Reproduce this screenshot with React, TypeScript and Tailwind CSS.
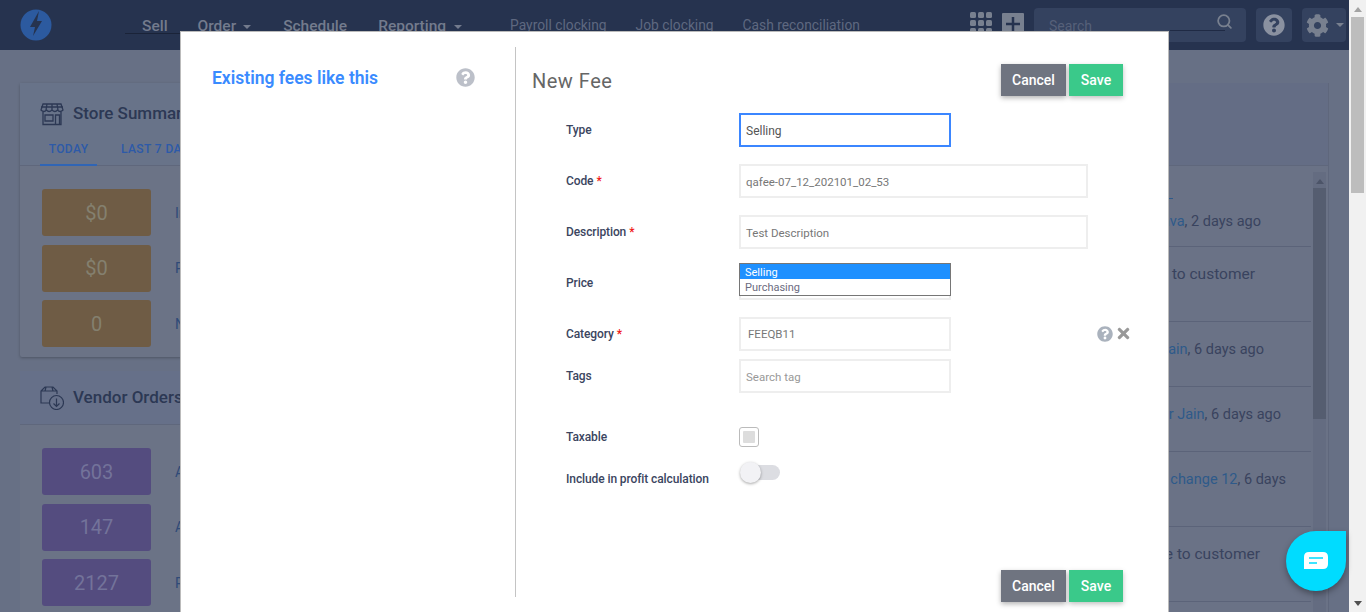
import { FaCog, FaQuestionCircle, FaTimes } from "react-icons/fa";
import { Search } from "lucide-react";

const font = "font-['Roboto',sans-serif]";

function ModalButtons() {
  return (
    <div className="flex gap-[3px]">
      <button className="w-[65px] h-8 bg-[#6f7480] text-white text-sm font-medium shadow-[0_2px_5px_rgba(0,0,0,0.3)]">
        Cancel
      </button>
      <button className="w-[54px] h-8 bg-[#3ac98a] text-white text-sm font-medium shadow-[0_2px_5px_rgba(0,0,0,0.25)]">
        Save
      </button>
    </div>
  );
}

function Required() {
  return <span className="text-[#f01818] ml-[3px]">*</span>;
}

function Field({ label, required, className, children }: { label: string; required?: boolean; className?: string; children: React.ReactNode }) {
  return (
    <div className={"flex items-center " + (className ?? "")}>
      <div className="w-[173px] text-xs font-medium text-[#3b4560] tracking-[-0.1px]">
        {label}
        {required && <Required />}
      </div>
      {children}
    </div>
  );
}

function TextBox({ value, wide, muted, inset, nudge }: { value: string; wide?: boolean; muted?: boolean; inset?: boolean; nudge?: boolean }) {
  return (
    <div className={(wide ? "w-[349px]" : "w-[212px]") + " h-[34px] border-2 border-[#eeeeee] flex items-center text-[11.5px] " + (inset ? "px-[7px] " : "px-[5px] ") + (nudge ? "pt-px " : "pt-[3px] ") + (muted ? "text-[#999]" : "text-[#777]")}>
      {value}
    </div>
  );
}

function Tile({ value, color, text, label }: { value: string; color: string; text: string; label: string }) {
  return (
    <div className="flex items-center">
      <div className={"w-[109px] h-[47px] rounded-[3px] flex items-center justify-center text-xl " + color + " " + text}>{value}</div>
      <span className="ml-6 text-sm text-[#2f4a78]">{label}</span>
    </div>
  );
}

function ActivityRow({ height, pad, large, children }: { height: string; pad: string; large?: boolean; children: React.ReactNode }) {
  return (
    <div className={"flex justify-end border-b border-[#5b6379] text-[#39435e] whitespace-nowrap " + (large ? "text-[15.5px] " : "text-[14.5px] ") + height + " " + pad}>
      {children}
    </div>
  );
}

function NavBar() {
  return (
    <header className="h-[50px] bg-[#26334f] flex items-center shrink-0">
      <svg className="ml-5 w-8 h-8" viewBox="0 0 32 32">
        <circle cx="16" cy="16" r="15.5" fill="#2c5a9f" />
        <path d="M19 2 L10 18 L15 18 L13 27 L22 12 L17 12 Z" fill="#26334f" />
      </svg>
      <nav className="flex items-center ml-[90px] text-[15.5px] font-medium text-[#737b8d] h-full pt-1">
        <span className="relative">
          Sell
          <span className="absolute left-[-17px] top-[18px] w-[60px] h-px bg-[#1a2338]" />
        </span>
        <span className="ml-[30px]">Order</span>
        <span className="ml-[7px] border-x-[4px] border-t-[4px] border-x-transparent border-t-[#737b8d]" />
        <span className="ml-[32px]">Schedule</span>
        <span className="ml-[31px]">Reporting</span>
        <span className="ml-[8px] border-x-[4px] border-t-[4px] border-x-transparent border-t-[#737b8d]" />
        <div className="ml-[48px] -mt-[3px] flex gap-[29px] text-[13.8px] font-normal text-[#5e6880]">
          <span>Payroll clocking</span>
          <span>Job clocking</span>
          <span>Cash reconciliation</span>
        </div>
      </nav>
      <div className="ml-auto flex items-center">
        <svg className="w-[23px] h-[23px] -mt-[3px]" viewBox="0 0 23 23" fill="#78808f">
          <rect x="0" y="0" width="6" height="6" rx="1.5" />
          <rect x="8" y="0" width="6" height="6" rx="1.5" />
          <rect x="16" y="0" width="6" height="6" rx="1.5" />
          <rect x="0" y="8" width="6" height="6" rx="1.5" />
          <rect x="8" y="8" width="6" height="6" rx="1.5" />
          <rect x="16" y="8" width="6" height="6" rx="1.5" />
          <rect x="0" y="16" width="6" height="6" rx="1.5" />
          <rect x="8" y="16" width="6" height="6" rx="1.5" />
          <rect x="16" y="16" width="6" height="6" rx="1.5" />
        </svg>
        <svg className="ml-[9px] w-[22px] h-[22px] -mt-[3px]" viewBox="0 0 22 22">
          <rect width="22" height="22" rx="1" fill="#78808f" />
          <path d="M11 4 V18 M4 11 H18" stroke="#26334f" strokeWidth="2.5" />
        </svg>
        <div className="relative ml-[10px] w-[212px] h-[34px] rounded bg-[#34425f] flex items-center justify-between pl-[15px] pr-[13px] pt-[2px] text-sm text-[#566079]">
          <span>Search</span>
          <Search className="w-[17px] h-[17px] text-[#78808f] -mt-[10px]" strokeWidth={2.5} />
          <span className="absolute left-[136px] top-[22px] w-[55px] h-px bg-[#1f2a44]" />
        </div>
        <div className="ml-[10px] w-9 h-[34px] rounded bg-[#34425f] flex items-center justify-center">
          <FaQuestionCircle className="w-[22px] h-[22px] text-[#8a91a0]" />
        </div>
        <div className="ml-[10px] mr-[3px] w-11 h-[34px] rounded bg-[#34425f] flex items-center pl-1">
          <FaCog className="w-[23px] h-[23px] text-[#78808f]" />
          <span className="ml-[7px] border-x-[4px] border-t-[4px] border-x-transparent border-t-[#78808f]" />
        </div>
      </div>
    </header>
  );
}

function LeftColumn() {
  return (
    <div className="w-[480px] flex flex-col gap-[14px]">
      <section className="h-[274px] bg-[#6b7386] shadow-[0_1px_3px_rgba(0,0,0,0.25)] rounded-[2px]">
        <div className="h-[83px] bg-[#687389] border-b border-[#5f677c] px-5 pt-[18px]">
          <div className="flex items-center text-[17px] font-medium text-[#2c3854]">
            <svg className="w-6 h-6 mr-[9px]" viewBox="0 0 24 24" fill="none" stroke="#2c3854" strokeWidth="1.3">
              <path d="M3 2 H21 L23 8 Q20 11 17.5 8 Q15 11 12 8 Q9 11 6.500 8 Q4 11 1 8 Z M7 2 L6 8 M12 2 V8 M17 2 L18 8 M1 5 H23" />
              <path d="M3 10 V22.500 H21 V10 M5 13 H13 V19 H5 Z M15.500 22.500 V13 H19.500 V22.500" />
            </svg>
            Store Summary
          </div>
          <div className="flex mt-[12px] text-xs font-medium tracking-[0.4px] text-[#2d5aa8]">
            <span className="w-[57px] h-[27px] text-center border-b-2 border-[#3065b5] pt-[2px]">TODAY</span>
            <span className="ml-6 pt-[2px]">LAST 7 DAYS</span>
          </div>
        </div>
        <div className="pl-[22px] pt-[23px] flex flex-col gap-[8.7px]">
          <Tile value="$0" color="bg-[#6f5c45]" text="text-[#84806f]" label="Invoices" />
          <Tile value="$0" color="bg-[#6f5c45]" text="text-[#84806f]" label="Payments" />
          <Tile value="0" color="bg-[#6f5c45]" text="text-[#84806f]" label="New" />
        </div>
      </section>
      <section className="h-[260px] bg-[#6b7386] rounded-[2px]">
        <div className="h-[54px] bg-[#667089] border-b border-[#5f677c] px-5 flex items-center text-[17px] font-medium text-[#2c3854]">
          <svg className="w-6 h-6 mr-[9px]" viewBox="0 0 24 24" fill="none" stroke="#2c3854" strokeWidth="1.2">
            <path d="M10 17 H1 V5 L5 1 H13 L17 5 V8 M1 5 H17 M6 1 L5 5 M12 1 L13 5" />
            <circle cx="16.500" cy="16.500" r="7" />
            <path d="M16.500 12.500 V20 M13.500 17.500 L16.500 20.500 L19.500 17.500" />
          </svg>
          Vendor Orders
        </div>
        <div className="pl-[22px] pt-[23px] flex flex-col gap-[8.7px]">
          <Tile value="603" color="bg-[#544c7f]" text="text-[#73739a]" label="Awaiting" />
          <Tile value="147" color="bg-[#544c7f]" text="text-[#73739a]" label="Approved" />
          <Tile value="2127" color="bg-[#544c7f]" text="text-[#73739a]" label="Received" />
        </div>
      </section>
    </div>
  );
}

function RightColumn() {
  return (
    <section className="flex-1 h-[560px] bg-[#6a7286] border-r border-[#5f677c] flex flex-col">
      <div className="h-[83px] bg-[#646d85] border-b border-[#5f677c] shrink-0" />
      <div className="flex flex-1 pt-[6px] pr-[2px]">
        <div className="flex-1">
          <div className="h-[75px] flex flex-col items-end border-b border-[#5b6379] text-[14.5px] text-[#39435e] whitespace-nowrap pr-[50px] pt-[16px]">
            <span className="self-end mr-[88px] w-[5px] h-px bg-[#2e5a8a] mt-[10px] mb-[12px]" />
            <span><span className="text-[#2e5a8a]">Rajesh Srivastava</span>, 2 days ago</span>
          </div>
          <ActivityRow height="h-[75px]" pad="pr-[56px] pt-[16px]" large>
            <span>to customer</span>
          </ActivityRow>
          <ActivityRow height="h-[65px]" pad="pr-[47px] pt-[17px]">
            <span><span className="text-[#2e5a8a]">Jain</span>, 6 days ago</span>
          </ActivityRow>
          <ActivityRow height="h-[65px]" pad="pr-[30px] pt-[17px]">
            <span><span className="text-[#2e5a8a]">r Jain</span>, 6 days ago</span>
          </ActivityRow>
          <ActivityRow height="h-[75px]" pad="pr-[25px] pt-[17px]">
            <span><span className="text-[#2e5a8a]">change 12</span>, 6 days</span>
          </ActivityRow>
          <ActivityRow height="h-[75px]" pad="pr-[51px] pt-[16px]" large>
            <span>sale to customer</span>
          </ActivityRow>
        </div>
        <div className="w-[13px] ml-[2px] bg-[#646c81] flex flex-col items-center h-full">
          <span className="mt-[7px] border-x-[4px] border-b-[5px] border-x-transparent border-b-[#4c5468]" />
          <div className="mt-1 w-full h-[231px] bg-[#555d70]" />
        </div>
      </div>
    </section>
  );
}

function FeeModal() {
  return (
    <div className="absolute left-[180px] top-[31px] w-[989px] h-[581px] bg-white border-l border-t border-r border-[#bbbbbb] flex">
      <div className="w-[335px] mt-[15px] h-[550px] border-r border-[#c4c4c4] pl-[31px] pr-[40px] flex justify-between pt-[17px]">
        <h3 className="text-[17.5px] font-semibold text-[#3a8bff] leading-7 whitespace-nowrap">Existing fees like this</h3>
        <FaQuestionCircle className="w-[19px] h-[19px] mt-1 text-[#bcc0c9]" />
      </div>
      <div className="flex-1 flex flex-col pl-4 pr-[45px]">
        <div className="flex items-center justify-between h-8 mt-[32px]">
          <h2 className="text-xl text-[#666] tracking-[0.5px] mt-[2px]">New Fee</h2>
          <ModalButtons />
        </div>
        <div className="pl-[34px] mt-[17px] flex flex-col">
          <Field label="Type" className="mb-[17px]">
            <div className="w-[212px] h-[34px] border-2 border-[#3b86ff] flex items-center px-[5px] pt-[2px] text-xs text-[#555]">Selling</div>
          </Field>
          <Field label="Code" required className="mb-[17px]">
            <TextBox value="qafee-07_12_202101_02_53" wide />
          </Field>
          <Field label="Description" required className="mb-[17px]">
            <TextBox value="Test Description" wide />
          </Field>
          <Field label="Price" className="mb-[17px] relative">
            <TextBox value="" />
            <div className="absolute left-[173px] top-[-3px] w-[212px] h-[33px] border border-[#767676] bg-white text-[11px] leading-[15px]">
              <div className="h-[15px] bg-[#1e90ff] text-white pl-[5px] pt-px">Selling</div>
              <div className="text-[#6b6b80] pl-[5px] pt-px">Purchasing</div>
            </div>
          </Field>
          <Field label="Category" required className="mb-2 relative">
            <TextBox value="FEEQB11" inset nudge />
            <FaQuestionCircle className="absolute left-[531px] top-[9px] w-4 h-4 text-[#aab2bd]" />
            <FaTimes className="absolute left-[549px] top-[8px] w-[17px] h-[17px] text-[#999]" />
          </Field>
          <Field label="Tags" className="mb-[34px]">
            <TextBox value="Search tag" muted />
          </Field>
          <Field label="Taxable" className="mb-6">
            <div className="w-5 h-5 rounded-[3px] border border-[#bbb] flex items-center justify-center">
              <div className="w-3 h-3 bg-[#dddddd] rounded-[1px]" />
            </div>
          </Field>
          <Field label="Include in profit calculation">
            <div className="relative w-[38px] h-[15px] rounded-full bg-[#dcdde2] ml-[3px] -mt-[13px]">
              <div className="absolute left-[-2px] top-[-3px] w-[21px] h-[21px] rounded-full bg-[#f2f2f5] shadow-[0_1px_3px_rgba(0,0,0,0.35)]" />
            </div>
          </Field>
        </div>
        <div className="mt-auto mb-[10px] flex justify-end">
          <ModalButtons />
        </div>
      </div>
    </div>
  );
}

function PageScrollbar() {
  return (
    <div className="w-[17px] h-full bg-[#f1f1f1] flex flex-col items-center shrink-0">
      <span className="mt-[7px] border-x-[4px] border-b-[5px] border-x-transparent border-b-[#a3a3a3]" />
      <div className="mt-[5px] w-[13px] h-[176px] bg-[#bdbdbd]" />
      <span className="mt-auto mb-[6px] border-x-[4px] border-t-[5px] border-x-transparent border-t-[#505050]" />
    </div>
  );
}

export default function App() {
  return (
    <div className={"relative flex h-[612px] w-full overflow-hidden " + font}>
      <div className="flex-1 min-w-0 bg-[#677085] flex flex-col">
        <NavBar />
        <main className="flex gap-5 pl-5 pr-5 pt-[33px]">
          <LeftColumn />
          <RightColumn />
        </main>
      </div>
      <PageScrollbar />
      <FeeModal />
      <button className="absolute left-[1286px] top-[531px] w-[60px] h-[60px] rounded-full rounded-tr-[6px] bg-[#00dcff] shadow-[0_3px_6px_rgba(0,0,0,0.35)] flex items-center justify-center">
        <svg className="w-6 h-[18px]" viewBox="0 0 24 18">
          <path d="M5 0 H19 Q24 0 24 5 V12 Q24 17 19 17 H0 V5 Q0 0 5 0 Z" fill="#fff" />
          <path d="M5 6 H19 M5 11 H13" stroke="#00dcff" strokeWidth="1.6" />
        </svg>
      </button>
    </div>
  );
}
